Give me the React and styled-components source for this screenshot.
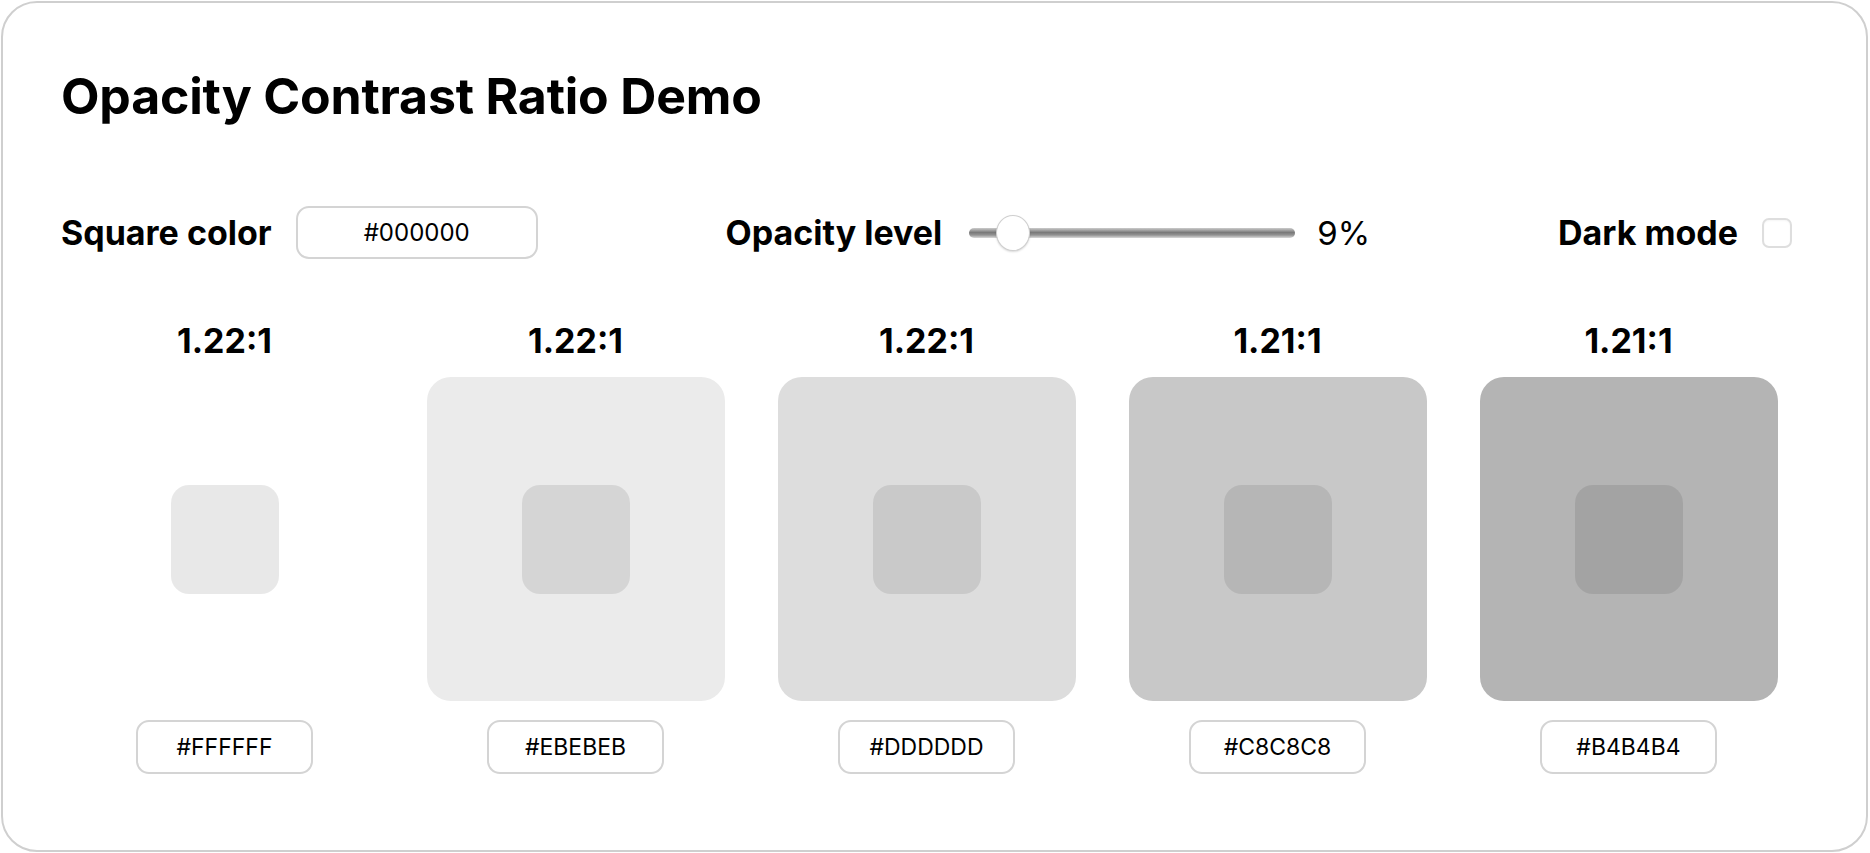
import styled, { createGlobalStyle } from 'styled-components';
import { useState } from "react"

const GlobalStyle = createGlobalStyle`
  html, body {
    margin: 0;
    padding: 0;
    background: #ffffff;
  }
  body {
    font-family: Inter, "Noto Sans", "Liberation Sans", sans-serif;
    color: #000;
  }
`

const toHex = (v) => '#' + v.toString(16).toUpperCase().padStart(2, '0').repeat(3)

function App() {
  const [opacity, setOpacity] = useState(9)
  const [dark, setDark] = useState(false)

  let swatches = [
    { bg: 255, ratio: "1.22:1" },
    { bg: 235, ratio: "1.22:1" },
    { bg: 221, ratio: "1.22:1" },
    { bg: 200, ratio: "1.21:1" },
    { bg: 180, ratio: "1.21:1" },
  ]

  return (
    <Page>
      <GlobalStyle />
      <Card>
        <Title>Opacity Contrast Ratio Demo</Title>
        <Controls>
          <Group>
            <Label>Square color</Label>
            <ColorInput defaultValue="#000000" />
          </Group>
          <Group>
            <Label>Opacity level</Label>
            <Slider
              type="range"
              min="0"
              max="100"
              value={opacity}
              onChange={e => setOpacity(Number(e.target.value))}
            />
            <Value>{opacity}%</Value>
          </Group>
          <Group>
            <Label>Dark mode</Label>
            <Check type="checkbox" checked={dark} onChange={() => setDark(!dark)} />
          </Group>
        </Controls>
        <Grid>
          {
            swatches.map((s, i) =>
              <Column key={i}>
                <Ratio>{s.ratio}</Ratio>
                <Outer style={{ backgroundColor: toHex(s.bg) }}>
                  <Inner style={{ backgroundColor: `rgba(0,0,0,${opacity / 100})` }} />
                </Outer>
                <Chip>{toHex(s.bg)}</Chip>
              </Column>
            )
          }
        </Grid>
      </Card>
    </Page>
  );
}

const Page = styled.div`
  padding: 1px 2px 1px 1px;
`

const Card = styled.div`
  box-sizing: border-box;
  height: 851px;
  border: 2px solid #cfcfcf;
  border-radius: 36px;
  padding: 63px 74px 0 58px;
  background: #fff;
`

const Title = styled.h1`
  margin: 0;
  font-size: 50px;
  line-height: 60px;
  font-weight: 700;
  letter-spacing: -0.2px;
`

const Controls = styled.div`
  display: flex;
  justify-content: space-between;
  align-items: center;
  margin-top: 80px;
  height: 53px;
`

const Group = styled.div`
  display: flex;
  align-items: center;
`

const Label = styled.span`
  font-size: 34px;
  font-weight: 700;
  margin-right: 24px;
`

const ColorInput = styled.input`
  box-sizing: border-box;
  width: 242px;
  height: 53px;
  border: 2px solid #d4d4d4;
  border-radius: 13px;
  text-align: center;
  font-family: Inter, "Noto Sans", sans-serif;
  font-size: 24px;
  color: #000;
  background: #fff;
  outline: none;
`

const Slider = styled.input`
  -webkit-appearance: none;
  appearance: none;
  width: 326px;
  height: 36px;
  margin: 0 22px 0 3px;
  background: transparent;

  &::-webkit-slider-runnable-track {
    height: 10px;
    border-radius: 5px;
    background: linear-gradient(to bottom, #cccccc 0%, #7a7a7a 45%, #929292 70%, #dadada 100%);
  }

  &::-webkit-slider-thumb {
    -webkit-appearance: none;
    appearance: none;
    width: 34px;
    height: 36px;
    margin-top: -13px;
    border-radius: 50%;
    background: #fff;
    border: 1px solid #cfcfcf;
    box-shadow: 0 1px 2px rgba(0,0,0,0.15);
  }
`

const Value = styled.span`
  font-size: 33px;
  font-weight: 400;
`

const Check = styled.input`
  -webkit-appearance: none;
  appearance: none;
  box-sizing: border-box;
  width: 30px;
  height: 30px;
  margin: 0;
  border: 2px solid #dedede;
  border-radius: 7px;
  background: #fff;
  box-shadow: inset 0 1px 2px rgba(0,0,0,0.04);
`

const Grid = styled.div`
  display: grid;
  grid-template-columns: repeat(5, 298px);
  column-gap: 53px;
  justify-content: center;
  margin-top: 62px;
`

const Column = styled.div`
  display: flex;
  flex-direction: column;
  align-items: center;
`

const Ratio = styled.div`
  font-size: 34px;
  line-height: 40px;
  font-weight: 700;
`

const Outer = styled.div`
  width: 298px;
  height: 324px;
  margin-top: 16px;
  border-radius: 24px;
  display: flex;
  align-items: center;
  justify-content: center;
`

const Inner = styled.div`
  width: 108px;
  height: 109px;
  border-radius: 18px;
`

const Chip = styled.div`
  box-sizing: border-box;
  width: 177px;
  height: 54px;
  margin-top: 19px;
  border: 2px solid #d4d4d4;
  border-radius: 13px;
  display: flex;
  align-items: center;
  justify-content: center;
  font-size: 23px;
`

export default App;
